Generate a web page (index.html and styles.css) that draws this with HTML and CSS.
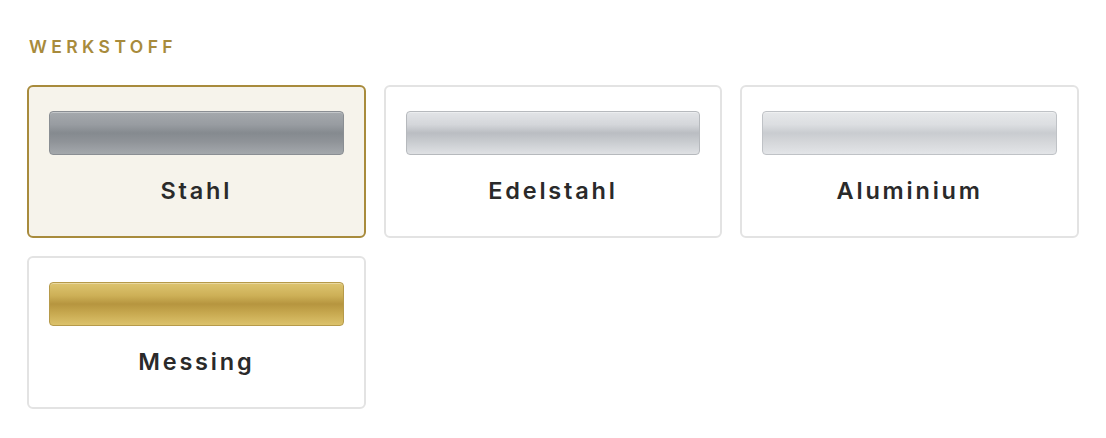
FILE: index.html
```
<!DOCTYPE html>
<html lang="de">
<head>
<meta charset="utf-8">
<title>Werkstoff</title>
<link rel="stylesheet" href="styles.css">
</head>
<body>
  <section class="option-group">
    <h3 class="group-label">Werkstoff</h3>
    <div class="material-grid">
      <button class="material-card is-selected" type="button">
        <span class="swatch swatch-steel"></span>
        <span class="material-name">Stahl</span>
      </button>
      <button class="material-card" type="button">
        <span class="swatch swatch-stainless"></span>
        <span class="material-name">Edelstahl</span>
      </button>
      <button class="material-card" type="button">
        <span class="swatch swatch-aluminium"></span>
        <span class="material-name">Aluminium</span>
      </button>
      <button class="material-card" type="button">
        <span class="swatch swatch-brass"></span>
        <span class="material-name">Messing</span>
      </button>
    </div>
  </section>
</body>
</html>
```
FILE: styles.css
```
html, body {
  margin: 0;
  background: #ffffff;
}

body {
  font-family: Inter, "Noto Sans", "Liberation Sans", sans-serif;
  color: #2a2a2a;
}

.option-group {
  padding: 37px 27px 20px;
}

.group-label {
  margin: 0 0 28px 2px;
  font-size: 17.5px;
  line-height: 20px;
  font-weight: 600;
  letter-spacing: 4.4px;
  text-transform: uppercase;
  color: #a88b3c;
}

.material-grid {
  display: grid;
  grid-template-columns: repeat(3, 1fr);
  gap: 18px;
}

.material-card {
  display: flex;
  flex-direction: column;
  align-items: stretch;
  height: 153px;
  box-sizing: border-box;
  padding: 24px 20px 0;
  border: 2px solid #e3e3e3;
  border-radius: 6px;
  background: #ffffff;
  font: inherit;
  color: inherit;
  cursor: pointer;
}

.material-card.is-selected {
  border-color: #a88b3c;
  background: #f6f3eb;
}

.swatch {
  display: block;
  height: 44px;
  box-sizing: border-box;
  border-radius: 4px;
  border: 1px solid rgba(0, 0, 0, 0.18);
  box-shadow: inset 0 1px 0 rgba(255, 255, 255, 0.35);
}

.swatch-steel {
  background: linear-gradient(180deg, #a5a9ad 0%, #989ca1 30%, #858a8f 50%, #8f9398 70%, #a4a8ac 100%);
  border-color: #8a8e93;
}

.swatch-stainless {
  background: linear-gradient(180deg, #e2e4e7 0%, #d4d6da 30%, #babdc2 50%, #c8cbcf 70%, #dfe1e4 100%);
  border-color: #b6b9bd;
}

.swatch-aluminium {
  background: linear-gradient(180deg, #e6e8ea 0%, #dcdee1 30%, #c9ccd0 50%, #d4d6d9 70%, #e3e5e8 100%);
  border-color: #bfc2c6;
}

.swatch-brass {
  background: linear-gradient(180deg, #ddc470 0%, #cdb057 30%, #b6953f 50%, #c6a74e 70%, #dcc26b 100%);
  border-color: #b69a4a;
}

.material-name {
  display: block;
  margin-top: 22px;
  font-size: 23.5px;
  line-height: 28px;
  font-weight: 600;
  letter-spacing: 2.8px;
  text-align: center;
  color: #2a2a2a;
}
```
